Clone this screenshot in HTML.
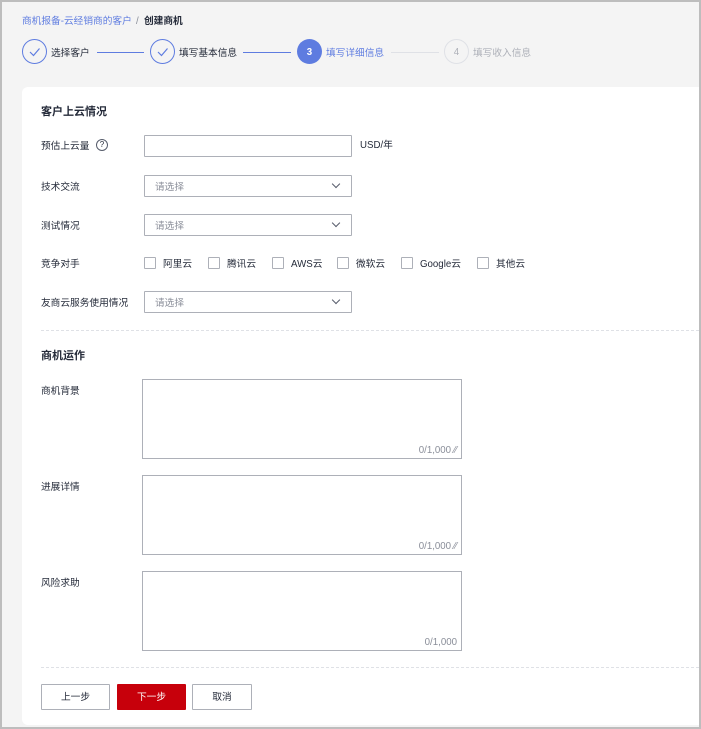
<!DOCTYPE html>
<html><head><meta charset="utf-8"><style>
*{box-sizing:border-box;margin:0;padding:0}
body{width:701px;height:729px;overflow:hidden;background:#f4f4f4;font-family:"Liberation Sans","Noto Sans CJK SC",sans-serif;font-size:9.7px;line-height:12px;color:#252b3a;position:relative}
.frame{position:absolute;left:0;top:0;width:701px;height:729px;border:2px solid #bdbdbd;z-index:10;pointer-events:none}
.a{position:absolute;white-space:nowrap}
.card{position:absolute;left:22px;top:87px;width:677px;height:638px;background:#fff;border-radius:6px 0 0 6px}
.inp{position:absolute;border:1px solid #adb0b8;background:#fff;height:22px;border-radius:1px}
.ph{position:absolute;left:10px;top:6px;color:#8a8e99}
.chev{position:absolute;right:12px;top:5px;width:6px;height:6px;border-right:1px solid #575d6c;border-bottom:1px solid #575d6c;transform:rotate(45deg)}
.cb{position:absolute;width:12px;height:12px;border:1px solid #adb0b8;border-radius:1px;top:257px}
.ta{position:absolute;left:142px;width:320px;height:80px;border:1px solid #adb0b8}
.cnt{position:absolute;right:4px;bottom:1px;color:#8a8e99}
.dash{position:absolute;left:41px;right:2px;border-top:1px dashed #dfe1e6}
.circ{position:absolute;width:25px;height:25px;border-radius:50%;top:39px}
.btn{position:absolute;top:684px;height:26px;border:1px solid #adb0b8;background:#fff;display:flex;align-items:center;justify-content:center;border-radius:1px;padding-top:2px}
</style></head><body>
<div class="frame"></div>
<div class="a" style="left:22px;top:16px;color:#5e7ce0">商机报备-云经销商的客户</div>
<div class="a" style="left:136px;top:16px;color:#8a8e99">/</div>
<div class="a" style="left:144px;top:16px;font-weight:bold">创建商机</div>

<div class="circ" style="left:22px;border:1px solid #5e7ce0"><svg width="23" height="23"><path d="M7 12l3.5 3.5L16.5 8.5" fill="none" stroke="#5e7ce0" stroke-width="1.2"/></svg></div>
<div class="a" style="left:51px;top:48px">选择客户</div>
<div class="a" style="left:97px;top:52px;width:47px;border-top:1px solid #5e7ce0"></div>
<div class="circ" style="left:150px;border:1px solid #5e7ce0"><svg width="23" height="23"><path d="M7 12l3.5 3.5L16.5 8.5" fill="none" stroke="#5e7ce0" stroke-width="1.2"/></svg></div>
<div class="a" style="left:179px;top:48px">填写基本信息</div>
<div class="a" style="left:243px;top:52px;width:48px;border-top:1px solid #5e7ce0"></div>
<div class="circ" style="left:297px;background:#5e7ce0;color:#fff;text-align:center;line-height:27px;font-weight:bold">3</div>
<div class="a" style="left:326px;top:48px;color:#5e7ce0">填写详细信息</div>
<div class="a" style="left:391px;top:52px;width:48px;border-top:1px solid #dfe1e6"></div>
<div class="circ" style="left:444px;border:1px solid #dfe1e6;color:#adb0b8;text-align:center;line-height:25px">4</div>
<div class="a" style="left:473px;top:48px;color:#adb0b8">填写收入信息</div>

<div class="card"></div>
<div class="a" style="left:41px;top:106px;font-size:11px;font-weight:bold">客户上云情况</div>
<div class="a" style="left:41px;top:141px">预估上云量</div>
<div class="a" style="left:96px;top:139px;width:12px;height:12px;border:1px solid #575d6c;border-radius:50%;font-size:8px;text-align:center;line-height:10px">?</div>
<div class="inp" style="left:144px;top:135px;width:208px"></div>
<div class="a" style="left:360px;top:140px">USD/年</div>

<div class="a" style="left:41px;top:182px">技术交流</div>
<div class="inp" style="left:144px;top:175px;width:208px"><span class="ph">请选择</span><span class="chev"></span></div>
<div class="a" style="left:41px;top:221px">测试情况</div>
<div class="inp" style="left:144px;top:214px;width:208px"><span class="ph">请选择</span><span class="chev"></span></div>
<div class="a" style="left:41px;top:259px">竞争对手</div>
<div class="cb" style="left:144px"></div><div class="a" style="left:163px;top:259px">阿里云</div>
<div class="cb" style="left:208px"></div><div class="a" style="left:227px;top:259px">腾讯云</div>
<div class="cb" style="left:272px"></div><div class="a" style="left:291px;top:259px">AWS云</div>
<div class="cb" style="left:337px"></div><div class="a" style="left:356px;top:259px">微软云</div>
<div class="cb" style="left:401px"></div><div class="a" style="left:420px;top:259px">Google云</div>
<div class="cb" style="left:477px"></div><div class="a" style="left:496px;top:259px">其他云</div>
<div class="a" style="left:41px;top:298px">友商云服务使用情况</div>
<div class="inp" style="left:144px;top:291px;width:208px"><span class="ph">请选择</span><span class="chev"></span></div>

<div class="dash" style="top:330px"></div>
<div class="a" style="left:41px;top:350px;font-size:11px;font-weight:bold">商机运作</div>
<div class="a" style="left:41px;top:386px">商机背景</div>
<div class="ta" style="top:379px"><span class="cnt">0/1,000 ⁄⁄</span></div>
<div class="a" style="left:41px;top:482px">进展详情</div>
<div class="ta" style="top:475px"><span class="cnt">0/1,000 ⁄⁄</span></div>
<div class="a" style="left:41px;top:578px">风险求助</div>
<div class="ta" style="top:571px"><span class="cnt">0/1,000</span></div>

<div class="dash" style="top:667px"></div>
<div class="btn" style="left:41px;width:69px">上一步</div>
<div class="btn" style="left:117px;width:69px;background:#c7000b;border-color:#c7000b;color:#fff">下一步</div>
<div class="btn" style="left:192px;width:60px">取消</div>
</body></html>
